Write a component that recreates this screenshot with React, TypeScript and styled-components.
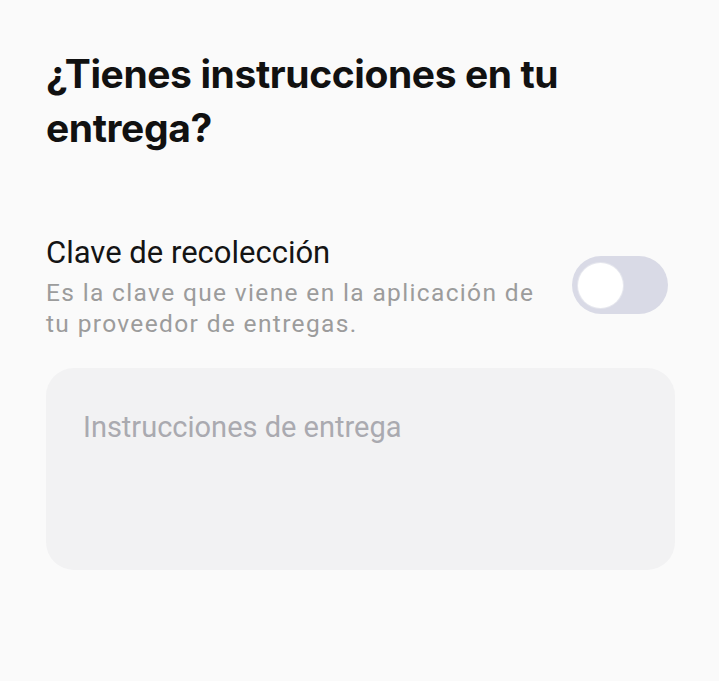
import React from "react";
import styled, { createGlobalStyle } from "styled-components";

const Global = createGlobalStyle`
  html, body { margin: 0; padding: 0; background: #fafafa; }
  body { font-family: Roboto, "Noto Sans", sans-serif; -webkit-font-smoothing: antialiased; }
`;

const Page = styled.div`
  width: 719px;
  min-height: 681px;
  background: #fafafa;
  box-sizing: border-box;
  padding: 47px 44px 0 46px;
  display: flex;
  flex-direction: column;
`;

const Title = styled.h1`
  margin: 0;
  width: 560px;
  font-family: Inter, Roboto, sans-serif;
  font-weight: 700;
  font-size: 39px;
  line-height: 54px;
  letter-spacing: -0.4px;
  color: #111111;
`;

const OptionRow = styled.div`
  margin-top: 80px;
  display: flex;
  align-items: flex-start;
  justify-content: space-between;
  padding-right: 7px;
`;

const OptionText = styled.div`
  display: flex;
  flex-direction: column;
`;

const OptionLabel = styled.div`
  font-size: 31px;
  line-height: 36px;
  color: #141414;
`;

const OptionHint = styled.div`
  margin-top: 6px;
  width: 510px;
  font-size: 24.5px;
  line-height: 31px;
  letter-spacing: 1.35px;
  color: #9c9c9c;
`;

const Track = styled.button<{ $on: boolean }>`
  margin-top: 21px;
  width: 96px;
  height: 58px;
  border: none;
  border-radius: 29px;
  padding: 0 6px;
  background: ${(p) => (p.$on ? "#2f6bff" : "#d9dae6")};
  display: flex;
  align-items: center;
  justify-content: ${(p) => (p.$on ? "flex-end" : "flex-start")};
  cursor: pointer;
  flex-shrink: 0;
`;

const Knob = styled.span`
  width: 45px;
  height: 45px;
  border-radius: 50%;
  background: #ffffff;
  box-shadow: 0 0 0 1px #e6e7ee;
`;

const TextArea = styled.textarea`
  margin-top: 29px;
  width: 629px;
  height: 202px;
  box-sizing: border-box;
  border: none;
  outline: none;
  resize: none;
  border-radius: 28px;
  background: #f2f2f3;
  padding: 42px 37px;
  font-family: Roboto, "Noto Sans", sans-serif;
  font-size: 29px;
  line-height: 34px;
  color: #222;
  &::placeholder { color: #aaaab0; }
`;

export default function App() {
  const [on, setOn] = React.useState(false);
  return (
    <>
      <Global />
      <Page>
        <Title>¿Tienes instrucciones en tu entrega?</Title>
        <OptionRow>
          <OptionText>
            <OptionLabel>Clave de recolección</OptionLabel>
            <OptionHint>Es la clave que viene en la aplicación de tu proveedor de entregas.</OptionHint>
          </OptionText>
          <Track $on={on} onClick={() => setOn(!on)} aria-label="Clave de recolección">
            <Knob />
          </Track>
        </OptionRow>
        <TextArea placeholder="Instrucciones de entrega" />
      </Page>
    </>
  );
}
